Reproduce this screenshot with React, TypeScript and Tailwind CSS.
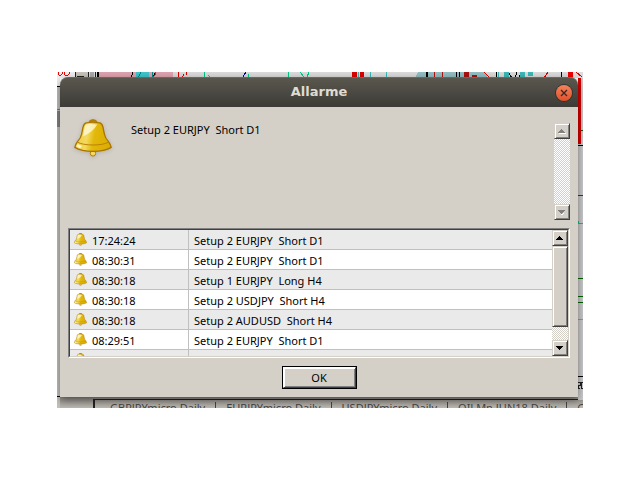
import { useId } from "react";
import { twMerge } from "tailwind-merge";

const message = "Setup 2 EURJPY  Short D1";

const alerts = [
  { time: "17:24:24", text: "Setup 2 EURJPY  Short D1" },
  { time: "08:30:31", text: "Setup 2 EURJPY  Short D1" },
  { time: "08:30:18", text: "Setup 1 EURJPY  Long H4" },
  { time: "08:30:18", text: "Setup 2 USDJPY  Short H4" },
  { time: "08:30:18", text: "Setup 2 AUDUSD  Short H4" },
  { time: "08:29:51", text: "Setup 2 EURJPY  Short D1" },
  { time: "", text: "" },
];

const chartTabs = [
  "GBPJPYmicro,Daily",
  "EURJPYmicro,Daily",
  "USDJPYmicro,Daily",
  "OILMn.JUN18,Daily",
  "G",
];

const Bell = ({ className }: { className?: string }) => {
  const id = useId();
  return (
    <svg viewBox="0 0 38 38" className={className} aria-hidden="true">
      <defs>
        <linearGradient id={id} x1="0" x2="1" y1="0" y2="0.15">
          <stop offset="0" stopColor="#efc93a" />
          <stop offset="0.4" stopColor="#f3d95e" />
          <stop offset="0.6" stopColor="#e2b80a" />
          <stop offset="1" stopColor="#dcae00" />
        </linearGradient>
      </defs>
      <circle cx="19" cy="34.4" r="2.7" fill="#f6d860" stroke="#b07c08" />
      <path d="M14.5 4C15 1.6 16.8 0.8 19 0.8C21.2 0.8 23 1.6 23.5 4Z" fill="#b98208" stroke="#a87400" />
      <path
        d="M12 3.8C15 3.2 23 3.2 26 3.8C27.8 4.4 28.6 6 29 8.5L30.4 15C31 18.5 32.5 20.5 34.4 22.4C35.6 24.2 36.8 26.2 37.2 28.4C33 31 27 32.4 19 32.4C11 32.4 5 31 0.8 28.4C1.2 26.2 2.4 24.2 3.6 22.4C5.5 20.5 7 18.5 7.6 15L9 8.5C9.4 6 10.2 4.4 12 3.8Z"
        fill={`url(#${id})`}
        stroke="#a87400"
        strokeWidth="1.3"
      />
      <path d="M3.4 23C9 27 29 27 34.6 23" fill="none" stroke="#b98208" />
      <path d="M11.4 6C13.5 4.8 19 4.8 23.4 5.6C20.5 9 19 13 9 17.5C9.8 13 10.4 9 11.4 6Z" fill="#fffbe0" opacity="0.75" />
      <path d="M3.6 25L8 27L6 29.2L2.4 27.6Z" fill="#fff6c0" />
    </svg>
  );
};

const Arrow = ({ down, disabled }: { down?: boolean; disabled?: boolean }) => (
  <svg viewBox="0 0 8 5" className="h-[5px] w-2" shapeRendering="crispEdges" aria-hidden="true">
    {disabled && <path d={down ? "M2 4h2v1h-1zM5 3h2l-3 2z" : "M1 4h7v1h-7z"} fill="#fff" />}
    <path
      d={down ? "M0 0h7v1h-1v1h-1v1h-1v1h-1v-1h-1v-1h-1v-1h-1z" : "M3 0h1v1h1v1h1v1h1v1h-7v-1h1v-1h1v-1h1z"}
      fill={disabled ? "#808080" : "#000"}
    />
  </svg>
);

const raised =
  "border border-t-[#d4d0c8] border-l-[#d4d0c8] border-r-[#404040] border-b-[#404040] bg-[#d4d0c8] shadow-[inset_1px_1px_#fff,inset_-1px_-1px_#808080]";

const ScrollBar = ({ disabled, name }: { disabled?: boolean; name: string }) => (
  <div className="flex w-4 shrink-0 flex-col bg-[repeating-conic-gradient(#fff_0_25%,#d4d0c8_0_50%)] bg-[length:2px_2px]">
    <button
      type="button"
      disabled={disabled}
      aria-label={`${name} up`}
      className={twMerge("flex h-4 shrink-0 items-center justify-center", raised)}
    >
      <Arrow disabled={disabled} />
    </button>
    <div className="flex-1">{!disabled && <div className={twMerge("h-[81px]", raised)} />}</div>
    <button
      type="button"
      disabled={disabled}
      aria-label={`${name} down`}
      className={twMerge("flex h-4 shrink-0 items-center justify-center", raised)}
    >
      <Arrow down disabled={disabled} />
    </button>
  </div>
);

// Slices of the trading terminal that stay visible around the dialog
const ChartTop = () => (
  <svg
    viewBox="0 0 526 6"
    preserveAspectRatio="none"
    className="absolute inset-x-0 top-0 h-1.5 w-full"
    shapeRendering="crispEdges"
    aria-hidden="true"
  >
    <rect width="526" height="6" fill="#dcdcdc" />
    <rect width="18" height="6" fill="#f0f0f0" />
    <path d="M1 0v2l1 1h2l1-1v-2M7 0v2l1 1h3l1-1v-2" fill="none" stroke="#e00" />
    <rect x="18" width="14" height="6" fill="#c8c4bc" />
    <path d="M18 0v6M27 4h-7M31 0v6M38 0v6" stroke="#222" />
    <rect x="33" width="4" height="6" fill="#aaa" />
    <rect x="42" width="74" height="6" fill="#dfa3ae" />
    <rect x="40" width="2" height="6" fill="#000" />
    <path d="M76 0l-2 6M82 0l-2 6" stroke="#000" />
    <rect x="79" width="13" height="6" fill="#3fc6cc" />
    <path d="M84 0l-3 6M98 0v3l-3 3M95 0v6" stroke="#088" />
    <path d="M121 0v6M127 2l-2 4M129 0v3" stroke="#d00" />
    <path d="M147 0v6M151 3l3 3M191 2v4M231 0v6M243 0l4 5M252 0l-2 5" stroke="#0c8" />
    <path d="M189 0l-3 5" stroke="#00c" />
    <path d="M298 0v4l2 2" stroke="#000" fill="none" />
    <path d="M295 0h5v6h-5zM303 0h4v6h-4z" fill="#d00" />
    <path d="M301 0v6M313 0v6M329 0v6" stroke="#3cb8b8" />
    <path d="M358 6l3-6h66l3 4v2z" fill="#93bfc4" />
    <path d="M369 0v6M371 0l-1 5M400 0l-1 6M402 0v6" stroke="#000" />
    <path d="M377.5 0v6M385.5 0v6" stroke="#b11" />
    <path d="M407 0h5v5h-5zM415 3h5v3h-5z" fill="#a11" />
    <path d="M427 0l6 6M491 0l-4 6M519 0l6 5" stroke="#d00" fill="none" />
    <path d="M439.5 0v6M451 0l4 6M460 0l-2 6M464 0l-2 6M504.5 0v6" stroke="#000" />
    <path d="M441 0h1v6h-1zM447 0h5v6h-5zM463 0h5v6h-5zM471 0h5v4h-5z" fill="#3cb8b8" />
    <rect x="511" width="5" height="6" fill="#e00" />
  </svg>
);

const ChartLeft = () => (
  <svg className="absolute left-0 top-1.5 h-[330px] w-[3px]" shapeRendering="crispEdges" aria-hidden="true">
    <rect width="3" height="330" fill="#c4c3c1" />
    <rect width="3" height="8" fill="#f0f0f0" />
    <rect y="8" width="3" height="1" fill="#000" />
    <rect y="31" width="3" height="1" fill="#777" />
    <rect y="33" width="3" height="16" fill="#858585" />
    <rect y="318" width="3" height="1" fill="#000" />
    <rect y="319" width="3" height="11" fill="#c4c1b9" />
  </svg>
);

const ChartRight = () => (
  <svg className="absolute right-0 top-1.5 h-[322px] w-[5px]" shapeRendering="crispEdges" aria-hidden="true">
    <rect width="5" height="322" fill="#cccbcc" />
    <rect width="3" height="66" fill="#d80000" />
    <path d="M3 52.5h2M0 117.5h5M0 200.5h5M0 218.5h5M0 224.5h5" stroke="#006400" />
    <path d="M0 143v2h5" stroke="#0c8" fill="none" />
    <path d="M0 67.5h5M0 298.5h5" stroke="#000" />
    <path d="M0 241.5h5" stroke="#999" />
    <path d="M0 304h2v3h-2v3h2M3 304h2M3 304v6h2" stroke="#222" fill="none" />
  </svg>
);

export default function App() {
  return (
    <main className="min-h-screen bg-white px-[57px] pt-[72px] font-['Noto_Sans',sans-serif] text-[11px] leading-4 text-black">
      <div className="relative overflow-hidden">
        <ChartTop />
        <ChartLeft />
        <ChartRight />

        {/* Alert dialog */}
        <section
          role="dialog"
          aria-labelledby="title"
          className="relative mt-[5px] mr-[5px] ml-[3px] rounded-t-lg bg-[#d4d0c8] shadow-[0_3px_8px_rgba(0,0,0,0.45)]"
        >
          <header className="relative flex h-[30px] items-center justify-center rounded-t-lg border-t border-[#6b675c] bg-linear-to-b from-[#5a574e] to-[#3c3b37]">
            <h1 id="title" className="pb-0.5 font-['DejaVu_Sans',sans-serif] text-[13px] font-bold text-[#dfdbd2]">
              Allarme
            </h1>
            <button
              type="button"
              aria-label="Close"
              className="absolute right-1.5 flex size-4 items-center justify-center rounded-full bg-linear-to-b from-[#f4815a] to-[#e2502a] ring-1 ring-[#35332e]"
            >
              <svg viewBox="0 0 8 8" className="size-2" aria-hidden="true">
                <path d="M1 1l6 6M7 1l-6 6" stroke="#3c2a22" strokeWidth="1.4" />
              </svg>
            </button>
          </header>

          <div className="px-2 pt-4 pb-2">
            <div className="flex h-[97px]">
              <Bell className="-mt-1 ml-1.5 size-[38px] shrink-0 drop-shadow-sm" />
              <textarea
                readOnly
                aria-label="Alert message"
                value={message}
                className="ml-[19px] flex-1 resize-none overflow-hidden bg-transparent leading-3.5 outline-none"
              />
              <ScrollBar disabled name="Scroll message" />
            </div>

            {/* Alert history */}
            <div className="mt-2 border border-t-[#808080] border-r-white border-b-white border-l-[#808080]">
              <div className="flex h-32 border border-t-[#404040] border-r-[#d4d0c8] border-b-[#d4d0c8] border-l-[#404040]">
                <div className="flex-1 overflow-hidden bg-white">
                  <table aria-label="Alerts" className="w-full table-fixed border-separate border-spacing-0">
                    <tbody>
                      {alerts.map((alert, idx) => (
                        <tr key={idx} className="odd:bg-[#eaeaea] even:bg-white">
                          <td className="h-5 w-[119px] border-r border-b border-[#c0c0c0] p-0">
                            <div className="flex items-center gap-[5px] pl-1">
                              <Bell className="size-[13px]" />
                              <span className="pt-0.5">{alert.time}</span>
                            </div>
                          </td>
                          <td className="h-5 border-b border-[#c0c0c0] p-0 pt-0.5 pl-[5px] whitespace-pre">
                            {alert.text}
                          </td>
                        </tr>
                      ))}
                    </tbody>
                  </table>
                </div>
                <ScrollBar name="Scroll alerts" />
              </div>
            </div>

            <div className="mt-2 flex justify-center">
              <button type="button" className="h-[23px] w-[75px] border border-black bg-black">
                <span className={twMerge("flex h-full items-center justify-center", raised, "border-t-white border-l-white")}>
                  OK
                </span>
              </button>
            </div>
          </div>
        </section>

        {/* Chart tabs */}
        <nav
          aria-label="Charts"
          className="flex h-[11px] overflow-hidden bg-linear-to-b from-[#8e8b86] to-[#bcb9b1] pt-0.5 pl-9 leading-3 text-[#444]"
        >
          <div className="flex h-4 flex-1 border-t border-l-2 border-[#222] pl-[5px]">
            {chartTabs.map((tab) => (
              <a key={tab} href="#" className="mt-0.5 shrink-0 border-r border-[#444] px-2.5">
                {tab}
              </a>
            ))}
          </div>
        </nav>
      </div>
    </main>
  );
}
